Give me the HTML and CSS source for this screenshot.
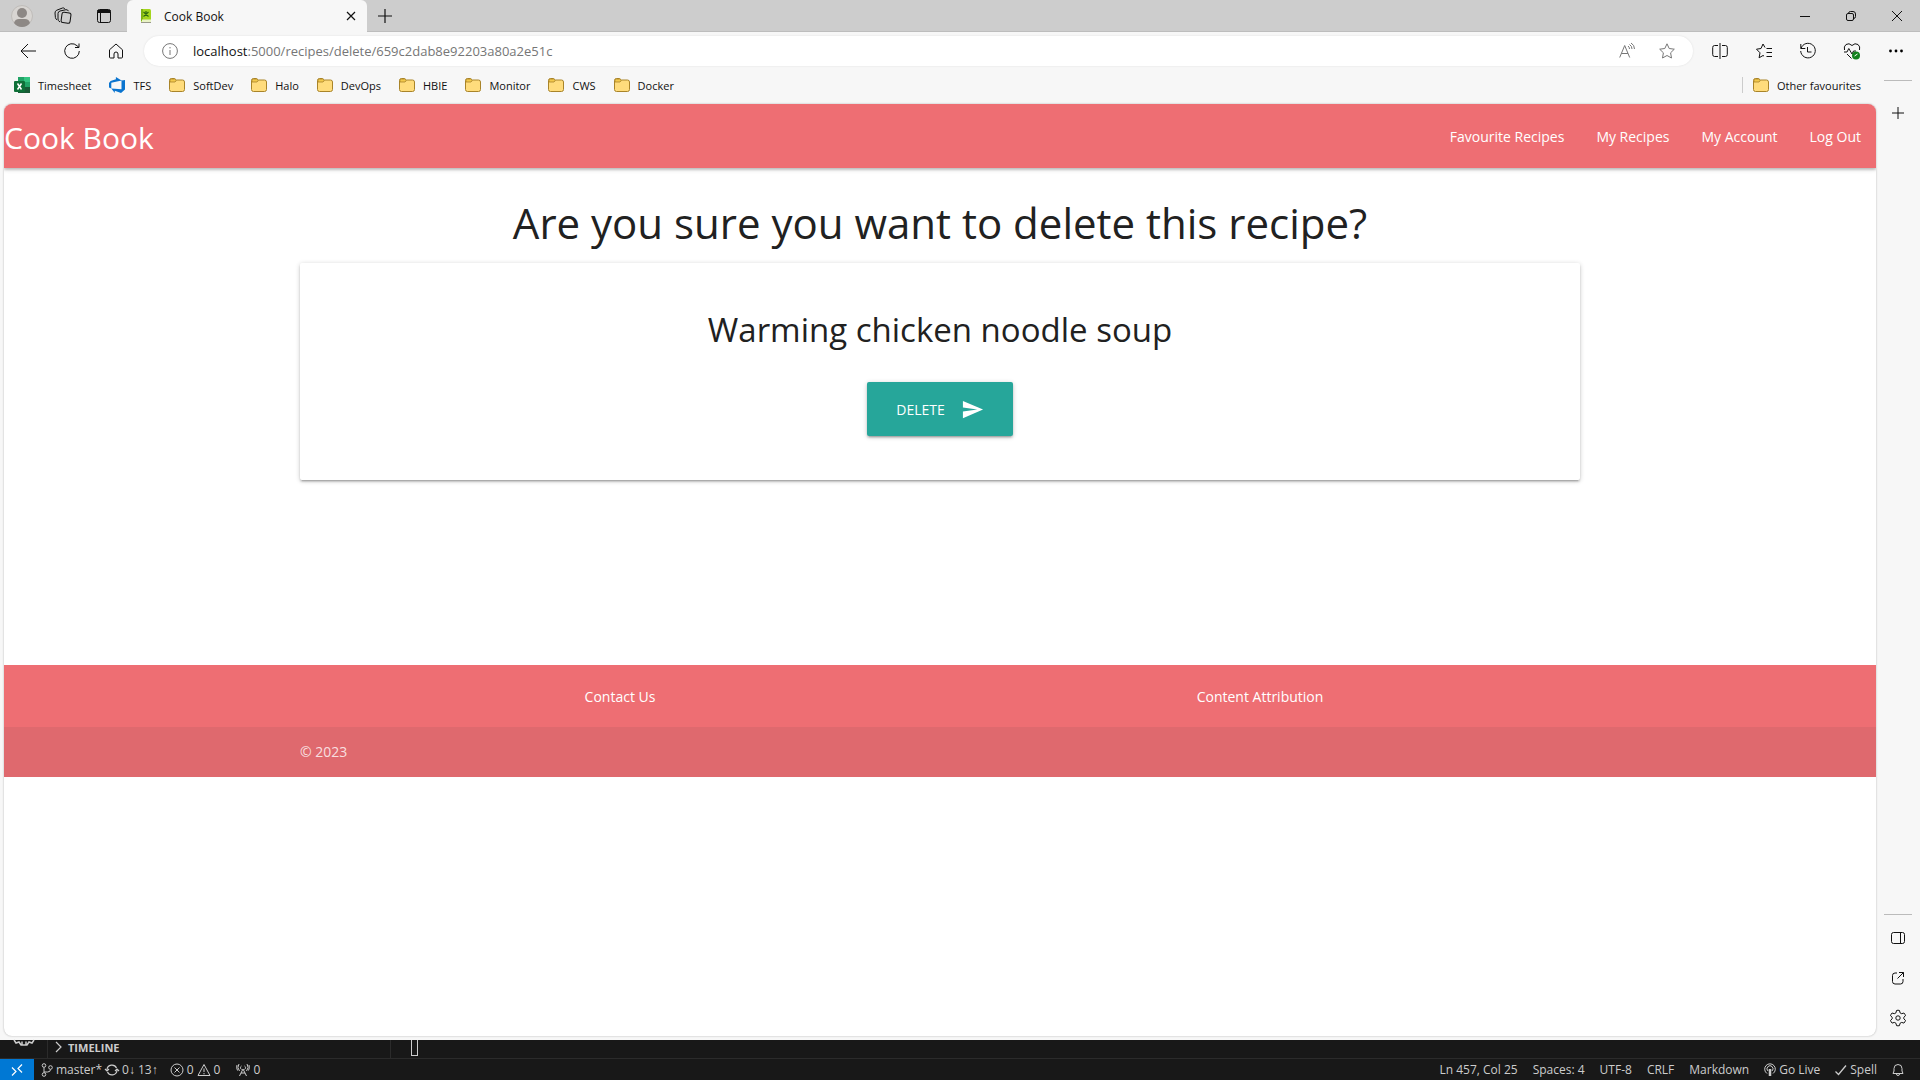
FILE: index.html
```html
<!DOCTYPE html>
<html lang="en">
<head>
<meta charset="utf-8">
<title>Cook Book</title>
<link rel="stylesheet" href="styles.css">
</head>
<body>
<svg class="defs" aria-hidden="true">
  <symbol id="folder" viewBox="0 0 16 16"><path d="M.5 3.500a2 2 0 0 1 2-2h3l2 1.500h6a2 2 0 0 1 2 2v7.500a2 2 0 0 1-2 2h-11a2 2 0 0 1-2-2z" fill="#ffdc7c" stroke="#a98429"/><path d="M1 5V3.500Q1 2 2.500 2h3l1.800 1.500L6 5z" fill="#f3c94b" stroke="#a98429" stroke-width=".8"/></symbol>
</svg>

<div class="browser">
  <header class="tabstrip">
    <button class="strip-btn avatar" aria-label="Profile"><svg viewBox="0 0 22 22" width="22" height="22"><circle cx="11" cy="11" r="10.500" fill="#d8d5d2" stroke="#bfbcb9"/><circle cx="11" cy="8" r="5" fill="#8d8885"/><path d="M3 18q1-4 5-4h6q4 0 5 4-3 4-8 4t-8-4z" fill="#8d8885"/></svg></button>
    <button class="strip-btn" aria-label="Workspaces"><svg class="ico" viewBox="0 0 18 18" width="18" height="18"><rect x="7.500" y="5.500" width="9" height="10.500" rx="2" transform="rotate(8 12 11)"/><path d="M6 14.800 5 14.300Q4 13.500 4 12V6.500Q4 4.500 6 4L12 2.700q1.800-.2 2.500 1.500M3 12.800Q1.500 12 1.400 10.500L1 6Q.9 4 2.800 3.200L8.500 1q1.500-.4 2.300.7"/></svg></button>
    <button class="strip-btn" aria-label="Tab actions"><svg class="ico" viewBox="0 0 16 16" width="16" height="16"><rect x="1.500" y="1.500" width="13" height="13" rx="2"/><path d="M1.500 3.500h13" stroke-width="3"/><path d="M4.500 4v10.500"/></svg></button>
    <div class="tab">
      <svg viewBox="0 0 16 16" width="16" height="16"><rect x="3" y="1" width="10" height="13" rx="1.500" fill="#a4d51e"/><rect x="3" y="1" width="2" height="12" fill="#7fb414"/><path d="M5.500 4 10.500 8.500M10.500 4 5.500 8.500M8 3v4" stroke="#2f6b12" stroke-width="1.200"/><path d="M4 11.500h9v2.500H4z" fill="#e9f3c5"/><path d="M3 14.500h10" stroke="#9a9a8a"/></svg>
      <span class="tab-title">Cook Book</span>
      <button class="tab-close" aria-label="Close tab"><svg class="ico" viewBox="0 0 10 10" width="10" height="10"><path d="m1 1 8 8M9 1 1 9" stroke-width="1.200"/></svg></button>
    </div>
    <button class="strip-btn new-tab" aria-label="New tab"><svg class="ico" viewBox="0 0 14 14" width="14" height="14"><path d="M7 0v14M0 7h14" stroke-width="1.200"/></svg></button>
    <div class="window-btns">
      <button aria-label="Minimise"><svg class="ico" viewBox="0 0 10 10" width="10" height="10"><path d="M0 5.500h10"/></svg></button>
      <button aria-label="Restore"><svg class="ico" viewBox="0 0 10 10" width="10" height="10"><rect x=".5" y="2.500" width="7" height="7" rx="1.500"/><path d="M2.500 2.500Q2.500.5 4.500.5H7q2.500 0 2.500 2.500v2.500q0 2-2 2"/></svg></button>
      <button aria-label="Close"><svg class="ico" viewBox="0 0 10 10" width="10" height="10"><path d="m0 0 10 10M10 0 0 10"/></svg></button>
    </div>
  </header>

  <div class="toolbar">
    <button class="tool" aria-label="Back"><svg class="ico" viewBox="0 0 16 16" width="16" height="16"><path d="M16 8H1M8 1 1 8l7 7"/></svg></button>
    <button class="tool" aria-label="Refresh"><svg class="ico" viewBox="0 0 16 16" width="16" height="16"><path d="M15.300 8A7.300 7.300 0 1 1 13 2.700L15 4.500M15 .5v4h-4"/></svg></button>
    <button class="tool" aria-label="Home"><svg class="ico" viewBox="0 0 16 16" width="16" height="16"><path d="M1.500 6.800 8 1l6.500 5.800V14q0 1-1 1H10v-4q0-2-2-2t-2 2v4H2.500q-1 0-1-1z"/></svg></button>
    <div class="address">
      <svg class="ico grey" viewBox="0 0 16 16" width="16" height="16"><circle cx="8" cy="8" r="7.400"/><path d="M8 7v5M8 4v1.400"/></svg>
      <div class="url" role="textbox" aria-label="Address"><span class="host">localhost</span>:5000/recipes/delete/659c2dab8e92203a80a2e51c</div>
      <button class="in-address" aria-label="Read aloud"><svg class="ico grey" viewBox="0 0 16 16" width="16" height="16"><path d="m.7 14.500 5-12 5 12M2.500 10.500h6.500M9 3q1.500 1 1.500 3M10.500 1.500Q13 3 13 6M12 0q3.500 2 3.500 6"/></svg></button>
      <button class="in-address" aria-label="Add to favourites"><svg class="ico grey" viewBox="0 0 16 16" width="16" height="16"><path d="m8 .8 2.200 4.700 5.100.7-3.700 3.600.9 5.200L8 12.500 3.500 15l.9-5.200L.7 6.200l5.100-.7z"/></svg></button>
    </div>
    <button class="tool right" aria-label="Split screen"><svg class="ico" viewBox="0 0 16 16" width="16" height="16"><path d="M6 2.500H2.500Q.7 2.500.7 4.500v7q0 2 1.800 2H6M10 2.500h3.500q1.800 0 1.800 2v7q0 2-1.800 2H10M8 0v16"/></svg></button>
    <button class="tool right" aria-label="Favourites"><svg class="ico" viewBox="0 0 16 16" width="16" height="16"><path d="M9 4.500 7 1 5 5.500l-4.500.7L4 9.800l-.9 5L7 12.500l1 .5M10.500 5.500H16M10.500 9.500H16M10.500 13.500H16"/></svg></button>
    <button class="tool right" aria-label="History"><svg class="ico" viewBox="0 0 16 16" width="16" height="16"><path d="M1 5.500A7.300 7.300 0 1 1 .7 8M.8 1v4.500h4.500M7.500 4v5h4"/></svg></button>
    <button class="tool right" aria-label="Browser essentials"><svg class="ico" viewBox="0 0 18 18" width="18" height="18"><path d="M1.500 8q-1-3.500 1.500-5.500 3-2 6 1 3-3 6-1 2.500 2 1.500 5.500M1 10h3l1.800-3.500L9 12l1.500-3H13M4 12l4.500 4.500"/><circle cx="13" cy="13.500" r="4" fill="#13811e" stroke="none"/><path d="m11.500 14 3-2" stroke="#fff"/></svg></button>
    <button class="tool right" aria-label="Settings and more"><svg viewBox="0 0 16 16" width="16" height="16"><circle cx="2.500" cy="8" r="1.400"/><circle cx="8" cy="8" r="1.400"/><circle cx="13.500" cy="8" r="1.400"/></svg></button>
  </div>

  <div class="window-body">
    <div class="content">
      <nav class="bookmarks" aria-label="Favourites bar">
        <a href="#"><svg viewBox="0 0 16 16" width="16" height="16"><path d="M4 0h12v16H4z" fill="#21a366"/><path d="M10 0h6v5h-6z" fill="#33c481"/><path d="M4 5h6v5H4z" fill="#107c41"/><path d="M4 10h12v6H4z" fill="#185c37"/><rect y="4" width="11" height="11" rx="1" fill="#0f7038"/><path d="m3.500 6.500 4 6M7.500 6.500l-4 6" stroke="#fff" stroke-width="1.500"/></svg>Timesheet</a>
        <a href="#"><svg viewBox="0 0 16 16" width="16" height="16"><path d="M16 3v9.600L12 16l-6.200-2.300V16L2.300 11.400l10.200.8V3.500zM12.600 3.500 6.900 0v2.300L1.600 3.900 0 5.900v4.700l2.300 1V5.700z" fill="#0a74cf"/></svg>TFS</a>
        <a href="#"><svg width="16" height="16"><use href="#folder"/></svg>SoftDev</a>
        <a href="#"><svg width="16" height="16"><use href="#folder"/></svg>Halo</a>
        <a href="#"><svg width="16" height="16"><use href="#folder"/></svg>DevOps</a>
        <a href="#"><svg width="16" height="16"><use href="#folder"/></svg>HBIE</a>
        <a href="#"><svg width="16" height="16"><use href="#folder"/></svg>Monitor</a>
        <a href="#"><svg width="16" height="16"><use href="#folder"/></svg>CWS</a>
        <a href="#"><svg width="16" height="16"><use href="#folder"/></svg>Docker</a>
        <a href="#" class="other"><svg width="16" height="16"><use href="#folder"/></svg>Other favourites</a>
      </nav>

      <div class="page">
        <nav class="navbar">
          <a href="#" class="brand">Cook Book</a>
          <ul class="nav-links">
            <li><a href="#">Favourite Recipes</a></li>
            <li><a href="#">My Recipes</a></li>
            <li><a href="#">My Account</a></li>
            <li><a href="#">Log Out</a></li>
          </ul>
        </nav>
        <main class="container">
          <h1>Are you sure you want to delete this recipe?</h1>
          <form class="card">
            <h2>Warming chicken noodle soup</h2>
            <button type="button" class="delete-btn">DELETE<svg viewBox="0 0 24 24" width="23" height="23"><path d="M2 21 23 12 2 3v7l15 2-15 2z" fill="#fff"/></svg></button>
          </form>
        </main>
        <footer class="footer">
          <div class="container footer-links">
            <a href="#">Contact Us</a>
            <a href="#">Content Attribution</a>
          </div>
          <div class="copyright"><div class="container">© 2023</div></div>
        </footer>
      </div>
    </div>

    <aside class="sidebar">
      <button class="side top" aria-label="Customise"><svg class="ico" viewBox="0 0 12 12" width="12" height="12"><path d="M6 0v12M0 6h12"/></svg></button>
      <div class="side-bottom">
        <button class="side" aria-label="Hide sidebar"><svg class="ico" viewBox="0 0 16 16" width="16" height="16"><rect x="1.500" y="2.500" width="13" height="11" rx="2"/><path d="M10.500 2.500v11"/></svg></button>
        <button class="side" aria-label="Open externally"><svg class="ico" viewBox="0 0 16 16" width="16" height="16"><path d="M7 3H5Q2.500 3 2.500 5.500v6Q2.500 14 5 14h5.500q2.500 0 2.500-2.500V9M9 2.500h4.500V7M13.500 2.500 7.500 8.500"/></svg></button>
        <button class="side" aria-label="Settings"><svg class="ico" viewBox="0 0 18 18" width="18" height="18"><path d="M7.500 1.500q1.500-.6 3 0l.5 2.300 1.700.9 2.200-.7q1.200 1.200 1.600 2.700L14.800 8.300v1.500l1.700 1.600q-.5 1.600-1.600 2.700l-2.200-.7-1.700.9-.5 2.300q-1.500.5-3 0L7 14.300l-1.700-.9-2.200.7q-1.100-1.100-1.600-2.700l1.700-1.600V8.300L1.500 6.700Q2 5.200 3.100 4l2.200.7L7 3.800z"/><circle cx="9" cy="9" r="2.200"/></svg></button>
      </div>
    </aside>
  </div>
</div>

<div class="editor">
  <div class="panel">
    <div class="activity"><svg class="ico light" viewBox="0 0 20 7" width="20" height="7"><path d="M0 0l2 3 3-1 2 3h1V1.500M12 1.500V5h1l2-3 3 1 2-3M8 5h4" stroke-width="1.500"/></svg></div>
    <div class="timeline"><svg class="ico light" viewBox="0 0 8 12" width="8" height="12"><path d="m1 1 5 5-5 5" stroke-width="1.200"/></svg>TIMELINE</div>
    <div class="code"><span class="caret"></span></div>
  </div>
  <footer class="status">
    <button class="remote" aria-label="Remote window"><svg class="ico" viewBox="0 0 12 12" width="12" height="12"><path d="m1 3.500 4 4-4 4M11 .5 7 4.500l4 4" stroke="#fff" stroke-width="1.200"/></svg></button>
    <button class="branch"><svg class="ico light" viewBox="0 0 12 14" width="12" height="14"><circle cx="3" cy="2.500" r="1.800"/><circle cx="3" cy="11.500" r="1.800"/><circle cx="9.500" cy="4.500" r="1.800"/><path d="M3 4.500v5M9.500 6.500q0 2.500-3 2.500H3"/></svg>master*</button>
    <button class="sync"><svg class="ico light" viewBox="0 0 14 12" width="14" height="12"><path d="M2 5.500a5 5 0 0 1 9.500-1.500M12 6.500A5 5 0 0 1 2.500 8M0 5l2 2 2-2M10 7l2-2 2 2" stroke-width="1.200"/></svg>0↓ 13↑</button>
    <button class="problems"><svg class="ico light" viewBox="0 0 14 14" width="14" height="14"><circle cx="7" cy="7" r="6"/><path d="m4.500 4.500 5 5M9.500 4.500l-5 5"/></svg>0<svg class="ico light" viewBox="0 0 14 14" width="14" height="14"><path d="M7 1.500 13 12.500H1zM7 5.500v3.500M7 10v1.300"/></svg>0</button>
    <button class="ports"><svg class="ico light" viewBox="0 0 14 14" width="14" height="14"><path d="M7 6 3.500 13M7 6l3.500 7M5 10h4M5.500 6.500a2 2 0 0 1 0-3.500M8.500 3a2 2 0 0 1 0 3.500M3.500 8Q.5 4.500 3 1M10.500 8Q13.500 4.500 11 1M1.500 7.500Q0 4.500 1 2M12.500 7.500Q14 4.500 13 2"/></svg>0</button>
    <div class="status-right">
      <button>Ln 457, Col 25</button>
      <button>Spaces: 4</button>
      <button>UTF-8</button>
      <button>CRLF</button>
      <button>Markdown</button>
      <button><svg class="ico light" viewBox="0 0 12 14" width="12" height="14"><path d="M3 10.500A5.300 5.300 0 1 1 9 10.500M4 8a3 3 0 1 1 4 0"/><path d="M6 6v7" stroke-width="2.500"/></svg>Go Live</button>
      <button><svg class="ico light" viewBox="0 0 12 12" width="12" height="12"><path d="m.5 7.500 3 3L11 1.500" stroke-width="1.300"/></svg>Spell</button>
      <button aria-label="Notifications"><svg class="ico light" viewBox="0 0 12 14" width="12" height="14"><path d="M1 10.500 2 8V5.500a4 4 0 0 1 8 0V8l1 2.500zM4.500 11a1.500 1.500 0 0 0 3 0"/></svg></button>
    </div>
  </footer>
</div>
</body>
</html>
```
FILE: styles.css
```css
* { box-sizing: border-box; }

body {
  margin: 0;
  min-height: 100vh;
  display: flex;
  flex-direction: column;
  background: #181818;
  font-family: "Open Sans", "Noto Sans", sans-serif;
  color: #111;
}

button {
  display: flex;
  align-items: center;
  justify-content: center;
  padding: 0;
  border: 0;
  background: none;
  color: inherit;
  font: inherit;
  white-space: nowrap;
}

a { color: inherit; text-decoration: none; white-space: nowrap; }
svg { flex: none; }
.defs { position: absolute; width: 0; height: 0; }
.ico { fill: none; stroke: #111; stroke-width: 1; overflow: visible; }
.ico.grey { stroke: #777; }
.ico.light { stroke: #ccc; }

/* Browser window */
.browser {
  flex: 1;
  display: flex;
  flex-direction: column;
  background: #f7f7f7;
}

.tabstrip {
  display: flex;
  height: 32px;
  padding-left: 1px;
  background: #cdcdcd;
  box-shadow: inset 0 -1px 0 #bdbdbd;
}
.strip-btn { width: 41px; }
.tab {
  display: flex;
  align-items: center;
  gap: 10px;
  width: 240px;
  margin-left: 3px;
  padding: 0 11px;
  border-radius: 6px 6px 0 0;
  background: #f7f7f7;
  font-size: 12px;
}
.tab-title { flex: 1; }
.tab-close { width: 10px; }
.new-tab { width: 35px; }
.window-btns { display: flex; margin-left: auto; }
.window-btns button { width: 46px; }

.toolbar {
  display: flex;
  align-items: center;
  height: 38px;
  padding: 0 2px 0 6px;
}
.tool { width: 44px; height: 30px; }
.address {
  flex: 1;
  display: flex;
  align-items: center;
  height: 30px;
  margin: 0 5px 0 6px;
  padding: 0 18px;
  border-radius: 15px;
  background: #fff;
  box-shadow: 0 0 2px #ddd;
}
.url { flex: 1; margin-left: 15px; font-size: 13px; color: #767676; }
.host { color: #111; }
.in-address { width: 16px; margin-left: 24px; }

.window-body { flex: 1; display: flex; }
.content { flex: 1; display: flex; flex-direction: column; padding: 0 0 4px 4px; }

.bookmarks {
  display: flex;
  align-items: center;
  gap: 18px;
  height: 34px;
  padding: 0 15px 4px 10px;
  font-size: 11px;
}
.bookmarks a { display: flex; align-items: center; gap: 8px; }
.bookmarks .other { margin-left: auto; padding-left: 10px; border-left: 1px solid #ccc; }

.sidebar {
  display: flex;
  flex-direction: column;
  justify-content: space-between;
  width: 44px;
  padding: 10px 8px 2px;
}
.side { width: 100%; height: 40px; }
.side.top { height: 64px; border-top: 1px solid #bbb; }
.side-bottom { padding-top: 3px; border-top: 1px solid #bbb; }

/* Recipe site */
.page {
  flex: 1;
  overflow: hidden;
  border-radius: 8px;
  background: #fff;
  box-shadow: 0 0 2px #aaa;
  font-size: 15px;
  color: #212121;
}
.navbar {
  display: flex;
  align-items: center;
  justify-content: space-between;
  height: 64px;
  background: #ee6e73;
  box-shadow: 0 2px 2px rgba(0, 0, 0, .14), 0 1px 5px rgba(0, 0, 0, .2);
  color: #fff;
}
.brand { padding-top: 2px; font-size: 30px; }
.nav-links { display: flex; gap: 2px; margin: 0; padding: 0; list-style: none; font-size: 14px; }
.nav-links a { padding: 0 15px; }

.container { width: 70%; max-width: 1280px; margin: 0 auto; }
h1, h2 { margin: 0; font-weight: 400; text-align: center; }
h1 { padding-top: 29px; font-size: 42px; line-height: 52px; }
.card {
  display: flex;
  flex-direction: column;
  align-items: center;
  gap: 28px;
  margin: 14px 0 185px;
  padding: 43px 24px 44px;
  border-radius: 2px;
  box-shadow: 0 2px 2px rgba(0, 0, 0, .14), 0 3px 1px -2px rgba(0, 0, 0, .12), 0 1px 5px rgba(0, 0, 0, .2);
}
h2 { font-size: 33px; line-height: 48px; }
.delete-btn {
  gap: 16px;
  height: 54px;
  padding: 0 29px;
  border-radius: 2px;
  background: #26a69a;
  box-shadow: 0 2px 2px rgba(0, 0, 0, .14), 0 3px 1px -2px rgba(0, 0, 0, .12), 0 1px 5px rgba(0, 0, 0, .2);
  color: #fff;
  font-size: 14px;
}

.footer { background: #ee6e73; color: #fff; font-size: 14px; }
.footer-links { display: grid; grid-template-columns: 1fr 1fr; place-items: center; height: 62px; }
.copyright { padding: 14px 0; background: rgba(51, 51, 51, .08); color: rgba(255, 255, 255, .8); line-height: 22px; }

/* Editor strip */
.editor { color: #ccc; font-size: 12px; }
.panel { display: flex; height: 18px; }
.activity { width: 48px; padding-left: 14px; border-right: 1px solid #2b2b2b; line-height: 0; }
.timeline {
  display: flex;
  align-items: center;
  gap: 5px;
  width: 343px;
  padding: 0 0 4px 7px;
  border-right: 1px solid #2b2b2b;
  font-size: 11px;
  font-weight: 700;
}
.code { padding-left: 20px; }
.caret { display: block; width: 7px; height: 16px; border: 1px solid #ccc; border-top: 0; }
.status { display: flex; height: 22px; border-top: 1px solid #2b2b2b; }
.status button { gap: 3px; }
.status .remote { width: 34px; background: #0078d4; }
.branch { margin-left: 7px; }
.sync { margin-left: 3px; }
.problems { margin-left: 12px; }
.ports { margin-left: 16px; }
.status-right { display: flex; gap: 15px; margin-left: auto; padding-right: 16px; }
```
